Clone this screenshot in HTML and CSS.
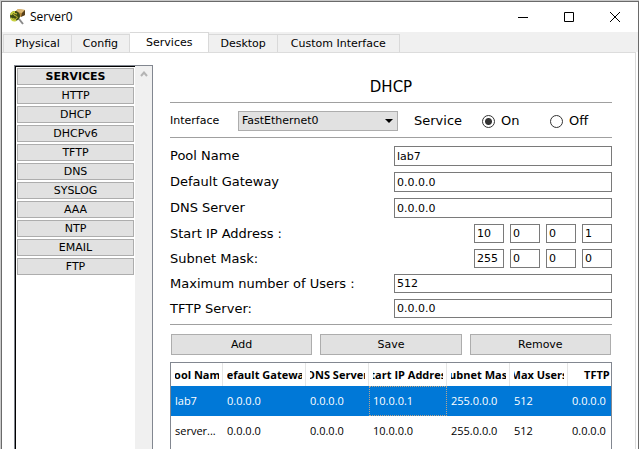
FILE: index.html
```html
<!DOCTYPE html>
<html lang="en">
<head>
<meta charset="utf-8">
<title>Server0</title>
<link rel="stylesheet" href="styles.css">
</head>
<body>
<div class="window">
  <header class="titlebar">
    <svg class="app-icon" viewBox="0 0 17 17" aria-hidden="true">
      <path d="M6 3l3-3 7 1v5l-5 2-5-1z" fill="#b98a3c"/>
      <path d="M6 3l3-3 7 1-3 3z" fill="#dcb873"/>
      <path d="M13 4l3-3v5l-4 2z" fill="#56401d"/>
      <path d="M10 10l4 5" stroke="#8a8a8a" stroke-width="2"/>
      <circle cx="6" cy="7" r="5" fill="#3c4a14"/>
      <path d="M2 6a4 4 0 0 1 4-3M2 9c1 2 3 3 5 2" fill="none" stroke="#c8d040" stroke-width="2"/>
      <path d="M8 5c-2-1-4 0-3 1s4 1 3 3-3 1-4 0" fill="none" stroke="#e3d33a"/>
    </svg>
    <h1 class="title">Server0</h1>
    <div class="window-controls">
      <button type="button" aria-label="Minimize"><svg viewBox="0 0 10 10"><path d="M0 5.5h10"/></svg></button>
      <button type="button" aria-label="Maximize"><svg viewBox="0 0 10 10"><path d="M.5 .5h9v9h-9z"/></svg></button>
      <button type="button" aria-label="Close"><svg viewBox="0 0 10 10"><path d="M0 0l10 10M10 0L0 10"/></svg></button>
    </div>
  </header>
  <nav class="tabs">
    <button type="button" class="tab">Physical</button>
    <button type="button" class="tab">Config</button>
    <button type="button" class="tab active">Services</button>
    <button type="button" class="tab">Desktop</button>
    <button type="button" class="tab">Custom Interface</button>
  </nav>
  <div class="pane">
    <aside class="services">
      <div class="service-list">
        <button type="button" class="heading">SERVICES</button>
        <button type="button">HTTP</button>
        <button type="button">DHCP</button>
        <button type="button">DHCPv6</button>
        <button type="button">TFTP</button>
        <button type="button">DNS</button>
        <button type="button">SYSLOG</button>
        <button type="button">AAA</button>
        <button type="button">NTP</button>
        <button type="button">EMAIL</button>
        <button type="button">FTP</button>
      </div>
      <div class="scrollbar">
        <svg viewBox="0 0 8 6" aria-hidden="true"><path d="M1 5l3-3.500 3 3.500"/></svg>
      </div>
    </aside>
    <main class="content">
      <h2 class="heading-main">DHCP</h2>
      <div class="interface-bar">
        <label class="small-label" for="interface">Interface</label>
        <div class="select-box">
          <select id="interface"><option>FastEthernet0</option></select>
          <svg viewBox="0 0 8 4" aria-hidden="true"><path d="M0 0h8L4 4z"/></svg>
        </div>
        <div class="service-switch" role="radiogroup" aria-labelledby="service-label">
          <span id="service-label">Service</span>
          <label><input type="radio" name="service" checked>On</label>
          <label><input type="radio" name="service">Off</label>
        </div>
      </div>
      <form class="pool">
        <div class="row"><label for="pool">Pool Name</label><input id="pool" value="lab7"></div>
        <div class="row"><label for="gateway">Default Gateway</label><input id="gateway" value="0.0.0.0"></div>
        <div class="row"><label for="dns">DNS Server</label><input id="dns" value="0.0.0.0"></div>
        <div class="row compact"><label for="ip1">Start IP Address :</label>
          <div class="octets"><input id="ip1" value="10"><input aria-label="Start IP octet 2" value="0"><input aria-label="Start IP octet 3" value="0"><input aria-label="Start IP octet 4" value="1"></div></div>
        <div class="row compact"><label for="mask1">Subnet Mask:</label>
          <div class="octets"><input id="mask1" value="255"><input aria-label="Mask octet 2" value="0"><input aria-label="Mask octet 3" value="0"><input aria-label="Mask octet 4" value="0"></div></div>
        <div class="row compact"><label for="users">Maximum number of Users :</label><input id="users" value="512"></div>
        <div class="row compact"><label for="tftp">TFTP Server:</label><input id="tftp" value="0.0.0.0"></div>
      </form>
      <div class="actions">
        <button type="button">Add</button>
        <button type="button">Save</button>
        <button type="button">Remove</button>
      </div>
      <div class="table-box">
        <table>
          <colgroup><col class="c-pool"><col class="c-gateway"><col class="c-dns"><col class="c-start"><col class="c-mask"><col class="c-users"><col class="c-tftp"></colgroup>
          <thead>
            <tr>
              <th><div>Pool Name</div></th>
              <th><div>Default Gateway</div></th>
              <th><div>DNS Server</div></th>
              <th><div>Start IP Address</div></th>
              <th><div>Subnet Mask</div></th>
              <th><div>Max Users</div></th>
              <th><div>TFTP Server</div></th>
            </tr>
          </thead>
          <tbody>
            <tr class="selected"><td>lab7</td><td>0.0.0.0</td><td>0.0.0.0</td><td class="current">10.0.0.1</td><td>255.0.0.0</td><td>512</td><td>0.0.0.0</td></tr>
            <tr><td>server...</td><td>0.0.0.0</td><td>0.0.0.0</td><td>10.0.0.0</td><td>255.0.0.0</td><td>512</td><td>0.0.0.0</td></tr>
          </tbody>
        </table>
      </div>
    </main>
  </div>
</div>
</body>
</html>
```
FILE: styles.css
```css
* {
  box-sizing: border-box;
}

body {
  margin: 0;
  padding: 1px 0 0 1px;
  height: 100vh;
  overflow: hidden;
  display: flex;
  background: #c9c9c9;
  font: 11px/16px "DejaVu Sans", Verdana, sans-serif;
  color: #000;
}

button,
input,
select {
  margin: 0;
  font: inherit;
  color: inherit;
  border-radius: 0;
}

.window {
  flex: 1;
  min-width: 0;
  display: flex;
  flex-direction: column;
  background: #fff;
  border: 1px solid #6a6a6a;
  border-bottom: 0;
}

/* Title bar */
.titlebar {
  display: flex;
  align-items: center;
  height: 30px;
  padding-left: 7px;
  flex: none;
}

.app-icon {
  width: 17px;
  height: 17px;
}

.title {
  flex: 1;
  margin: 0 0 0 4px;
  font: 12px/16px "Open Sans", "Segoe UI", sans-serif;
}

.window-controls {
  display: flex;
}

.window-controls button {
  width: 46px;
  height: 28px;
  padding: 0;
  border: 0;
  background: none;
  display: grid;
  place-items: center;
}

.window-controls svg {
  width: 10px;
  height: 10px;
  fill: none;
  stroke: #000;
}

/* Tabs */
.tabs {
  display: flex;
  align-items: flex-end;
  flex: none;
  height: 20px;
  padding-left: 1px;
  background: #f0f0f0;
}

.tab {
  height: 18px;
  padding: 0 11px;
  border: 1px solid #d9d9d9;
  border-width: 1px 1px 0 0;
  background: #f0f0f0;
  line-height: 17px;
}

.tab:first-child {
  border-left-width: 1px;
}

.tab:last-child {
  padding: 0 13px;
}

.tab.active {
  height: 20px;
  padding: 0 16px;
  background: #fff;
}

/* Pane */
.pane {
  flex: 1;
  min-height: 0;
  display: flex;
  gap: 17px;
  margin-right: 2px;
  padding: 12px 23px 0 12px;
  border: 1px solid #dcdcdc;
  border-width: 1px 1px 0 0;
}

.services {
  display: flex;
  flex: none;
  width: 139px;
  border: 1px solid #828790;
  border-bottom: 0;
}

.service-list {
  flex: 1;
  display: flex;
  flex-direction: column;
  gap: 2px;
  padding: 1px;
  border: 1px solid #000;
  border-width: 1px 0 0 1px;
}

.service-list button {
  height: 17px;
  padding: 0;
  border: 1px solid #adadad;
  background: #e1e1e1;
  line-height: 15px;
}

.service-list .heading {
  font-weight: bold;
}

.scrollbar {
  width: 17px;
  padding-top: 5px;
  background: #f0f0f0;
}

.scrollbar svg {
  display: block;
  width: 8px;
  height: 6px;
  margin: 0 auto;
  fill: none;
  stroke: #b4b4b4;
  stroke-width: 2;
}

/* DHCP settings */
.content {
  flex: 1;
  min-width: 0;
  display: flex;
  flex-direction: column;
  font-size: 13px;
}

.heading-main {
  margin: 0;
  padding: 12px 0 5px;
  font-size: 15px;
  line-height: 20px;
  font-weight: normal;
  text-align: center;
}

.interface-bar {
  display: flex;
  align-items: center;
  height: 36px;
  padding-top: 2px;
  border: 1px solid #a0a0a0;
  border-width: 1px 0;
}

.small-label {
  flex: none;
  width: 68px;
  font-size: 11px;
}

.select-box {
  position: relative;
  flex: none;
  width: 160px;
}

.select-box select {
  display: block;
  width: 100%;
  height: 20px;
  padding: 0 18px 0 3px;
  border: 1px solid #adadad;
  background: #e1e1e1;
  font-size: 11px;
  appearance: none;
}

.select-box svg {
  position: absolute;
  top: 8px;
  right: 5px;
  width: 8px;
  height: 4px;
  pointer-events: none;
}

.service-switch {
  display: grid;
  grid-template-columns: 68px 68px 1fr;
  flex: 1;
  min-width: 0;
  align-items: center;
  padding-left: 16px;
}

.service-switch label {
  display: flex;
  align-items: center;
  gap: 6px;
}

.service-switch input {
  flex: none;
  width: 13px;
  height: 13px;
  border: 1px solid #333;
  border-radius: 50%;
  background: #fff;
  appearance: none;
}

.service-switch input:checked {
  background: radial-gradient(circle, #333 3px, #fff 4px);
}

.pool {
  display: flex;
  flex-direction: column;
  gap: 6px;
  padding: 8px 0 6px;
  border-bottom: 1px solid #a0a0a0;
}

.row {
  display: flex;
  align-items: center;
  height: 20px;
}

.row.compact {
  height: 19px;
}

.row label {
  flex: 1;
}

.row input {
  width: 218px;
  height: 100%;
  padding: 0 2px;
  border: 1px solid #7a7a7a;
  background: #fff;
  font-size: 11px;
}

.octets {
  display: flex;
  gap: 6px;
  height: 100%;
}

.row .octets input {
  width: 30px;
}

.actions {
  display: flex;
  gap: 8px;
  padding: 9px 1px 7px;
}

.actions button {
  flex: 1;
  height: 21px;
  padding: 0;
  border: 1px solid #adadad;
  background: #e1e1e1;
  font-size: 11px;
}

/* Pool table */
.table-box {
  flex: 1;
  min-height: 0;
  overflow: hidden;
  border: 1px solid #828790;
  border-bottom: 0;
}

table {
  width: 493px;
  table-layout: fixed;
  border-collapse: collapse;
  font: 11px/16px "Open Sans", "Segoe UI", sans-serif;
}

.c-pool { width: 52px; }
.c-gateway { width: 83px; }
.c-dns { width: 63px; }
.c-start { width: 78px; }
.c-mask { width: 63px; }
.c-users { width: 58px; }
.c-tftp { width: 96px; }

th {
  height: 23px;
  padding: 0 4px;
  background: linear-gradient(#e5e5e5, #e5e5e5) right / 1px 100% no-repeat;
}

th div {
  display: flex;
  justify-content: center;
  overflow: hidden;
  white-space: nowrap;
}

td {
  height: 30px;
  padding: 0 4px;
  white-space: nowrap;
}

.selected {
  background: #0078d7;
  color: #fff;
}

.current {
  outline: 1px dotted #b9a58c;
  outline-offset: -1px;
}
```
